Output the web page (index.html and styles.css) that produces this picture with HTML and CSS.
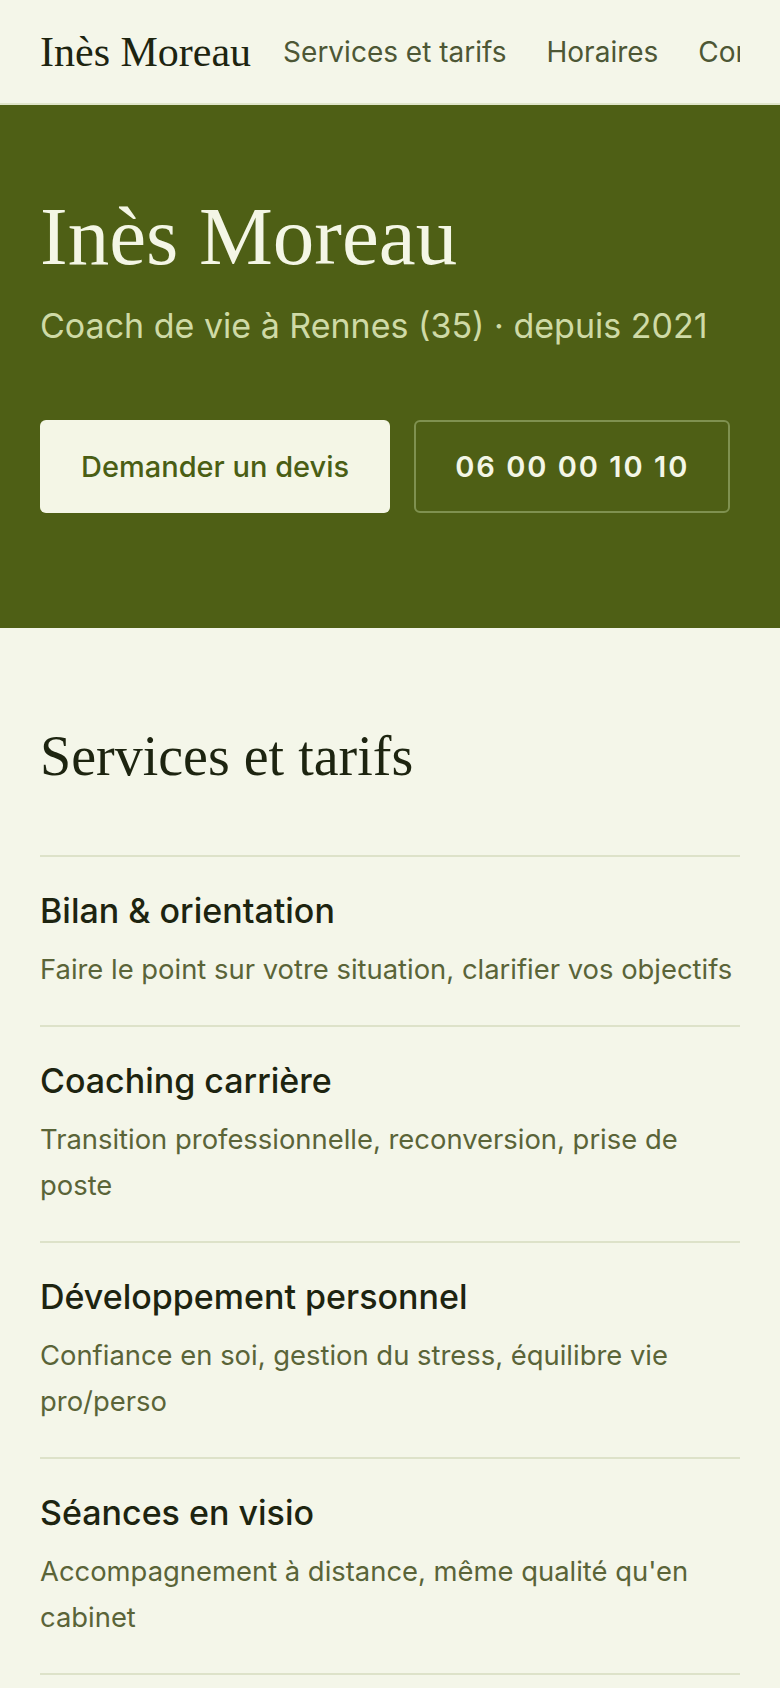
FILE: index.html
```html
<!DOCTYPE html>
<html lang="fr">
<head>
<meta charset="utf-8">
<title>Inès Moreau — Coach de vie à Rennes</title>
<link rel="stylesheet" href="styles.css">
</head>
<body>
<header class="site-header">
  <a class="logo" href="#">Inès Moreau</a>
  <nav class="nav">
    <a href="#services">Services et tarifs</a>
    <a href="#horaires">Horaires</a>
    <a href="#contact">Contact</a>
  </nav>
</header>

<section class="hero">
  <h1 class="hero-title">Inès Moreau</h1>
  <p class="hero-sub">Coach de vie à Rennes (35) · depuis 2021</p>
  <div class="hero-actions">
    <a class="btn btn-primary" href="#contact">Demander un devis</a>
    <a class="btn btn-outline" href="tel:0600001010">06 00 00 10 10</a>
  </div>
</section>

<main class="services" id="services">
  <h2 class="section-title">Services et tarifs</h2>
  <ul class="service-list">
    <li class="service">
      <h3 class="service-name">Bilan &amp; orientation</h3>
      <p class="service-desc">Faire le point sur votre situation, clarifier vos objectifs</p>
    </li>
    <li class="service">
      <h3 class="service-name">Coaching carrière</h3>
      <p class="service-desc">Transition professionnelle, reconversion, prise de poste</p>
    </li>
    <li class="service">
      <h3 class="service-name">Développement personnel</h3>
      <p class="service-desc">Confiance en soi, gestion du stress, équilibre vie pro/perso</p>
    </li>
    <li class="service">
      <h3 class="service-name">Séances en visio</h3>
      <p class="service-desc">Accompagnement à distance, même qualité qu'en cabinet</p>
    </li>
  </ul>
</main>
</body>
</html>
```

FILE: styles.css
```css
* { box-sizing: border-box; }

html, body {
  margin: 0;
  padding: 0;
}

body {
  background: #f4f6e9;
  color: #1d2410;
  font-family: "Inter", "Noto Sans", sans-serif;
}

a { text-decoration: none; }

.site-header {
  display: flex;
  align-items: center;
  gap: 32px;
  height: 105px;
  padding: 0 40px;
  background: #f4f6e9;
  border-bottom: 2px solid #dfe5ca;
}

.logo {
  flex: none;
  font-family: "Liberation Serif", serif;
  font-size: 42px;
  color: #1d2410;
  white-space: nowrap;
}

.nav {
  display: flex;
  gap: 40px;
  min-width: 0;
  overflow: hidden;
  white-space: nowrap;
}

.nav a {
  font-size: 28px;
  color: #4d5735;
}

.hero {
  background: #4e5f15;
  padding: 86px 40px 115px;
}

.hero-title {
  margin: 0;
  font-family: "Liberation Serif", serif;
  font-weight: 400;
  font-size: 83px;
  line-height: 90px;
  color: #f4f6e6;
}

.hero-sub {
  margin: 22px 0 0;
  font-size: 34px;
  line-height: 46px;
  color: #cfdaa6;
}

.hero-actions {
  display: flex;
  gap: 24px;
  margin-top: 71px;
}

.btn {
  flex: none;
  display: flex;
  align-items: center;
  justify-content: center;
  height: 93px;
  padding: 0 39px;
  border-radius: 6px;
  font-size: 29px;
  white-space: nowrap;
  border: 2px solid transparent;
}

.btn-primary {
  background: #f4f6e6;
  color: #4a5e14;
  font-weight: 500;
}

.btn-outline {
  border-color: #7f9150;
  color: #f4f6e6;
  font-weight: 600;
  letter-spacing: 2px;
}

.services {
  padding: 95px 40px 40px;
}

.section-title {
  margin: 0 0 65px;
  font-family: "Liberation Serif", serif;
  font-weight: 400;
  font-size: 56px;
  line-height: 67px;
  color: #1d2410;
}

.service-list {
  list-style: none;
  margin: 0;
  padding: 0;
  border-top: 2px solid #dde2c9;
}

.service {
  padding: 33px 0 33px;
  border-bottom: 2px solid #dde2c9;
}

.service-name {
  margin: 0;
  font-size: 34px;
  line-height: 42px;
  font-weight: 500;
  color: #1d2410;
}

.service-desc {
  margin: 14px 0 0;
  font-size: 27.4px;
  line-height: 46px;
  color: #5a6438;
}
```
